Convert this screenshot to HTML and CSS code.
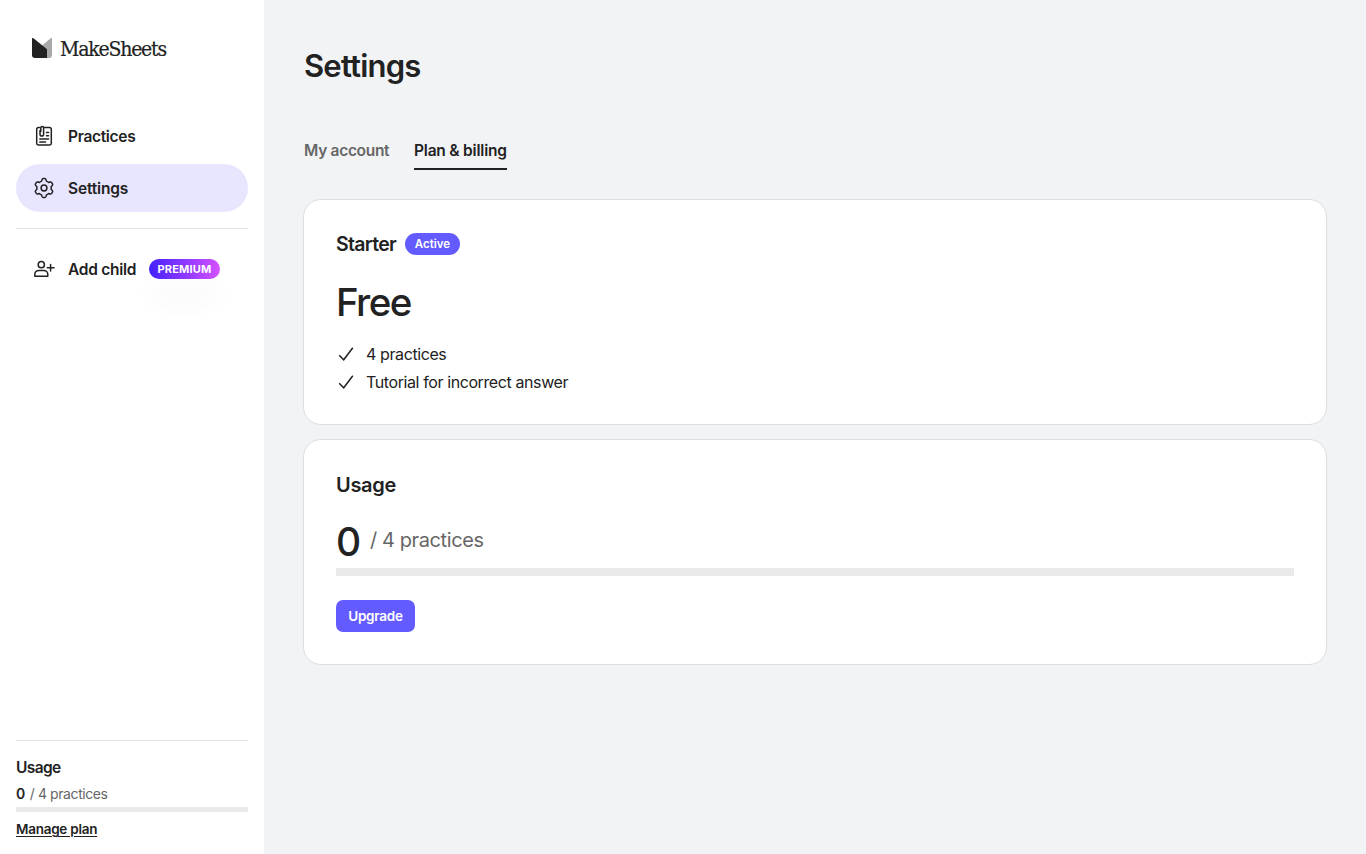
FILE: index.html
```html
<!DOCTYPE html>
<html lang="en">
<head>
<meta charset="utf-8">
<title>MakeSheets – Settings</title>
<link rel="stylesheet" href="styles.css">
</head>
<body>
<div class="app">
  <aside class="sidebar">
    <a class="logo">
      <svg width="20" height="20" viewBox="0 0 20 20"><path d="M20 .8V17a3 3 0 0 1-3 3h-3L9 8.500 18.600.2Q20-.6 20 .8z" fill="#a9a9a9"/><path d="M0 1Q0-.6 1.500.3L15 11.200V20H3a3 3 0 0 1-3-3z" fill="#222"/></svg>
      <span class="logo-text">MakeSheets</span>
    </a>
    <nav class="nav">
      <a class="nav-item">
        <svg class="icon" viewBox="0 0 24 24"><path d="M7.500 3.500h-1a1.800 1.800 0 0 0-1.800 1.800v14a1.800 1.800 0 0 0 1.800 1.800h11a1.800 1.800 0 0 0 1.800-1.800v-14a1.800 1.800 0 0 0-1.800-1.800H12M8 6.500v3.700a1.800 1.800 0 0 0 3.600 0V4a1.400 1.400 0 0 0-2.800 0v3.500M14.500 8.500h2M14.500 11.700h2M7.800 15h8.700M7.800 18h5.700"/></svg>
        <span class="label practices">Practices</span>
      </a>
      <a class="nav-item selected">
        <svg class="icon" viewBox="0 0 24 24"><path d="M10 3.600Q10.300 2.600 11.200 2.600h1.600q.9 0 1.200 1l.4 1.500q1.300.5 2.200 1.300l1.600-.4q1-.2 1.500.6l.8 1.400q.5.800-.2 1.500l-1.200 1.200q.2 1.300 0 2.600l1.200 1.200q.7.700.2 1.500l-.8 1.400q-.5.800-1.500.6l-1.600-.4q-.9.800-2.200 1.300l-.4 1.500q-.3 1-1.200 1h-1.600q-.9 0-1.200-1l-.4-1.500q-1.300-.5-2.200-1.300l-1.600.4q-1 .2-1.500-.6l-.8-1.400q-.5-.8.2-1.500l1.200-1.200q-.2-1.300 0-2.600L3.700 9.500q-.7-.7-.2-1.500l.8-1.400q.5-.8 1.500-.6l1.600.4q.9-.8 2.200-1.300z"/><circle cx="12" cy="12" r="2.900"/></svg>
        <span class="label settings">Settings</span>
      </a>
      <hr class="rule">
      <a class="nav-item">
        <svg class="icon" viewBox="0 0 24 24"><circle cx="9.300" cy="7.700" r="3.100"/><path d="M2.800 19.200v-1.800a4 4 0 0 1 4-4h5a4 4 0 0 1 4 4v1.800zM18.600 7.500v6.600M15.300 10.800h6.700"/></svg>
        <span class="label add">Add child</span>
        <span class="premium">PREMIUM</span>
      </a>
    </nav>
    <div class="side-usage">
      <div class="side-title">Usage</div>
      <div class="side-count"><b>0</b><span>/ 4 practices</span></div>
      <div class="side-bar"></div>
      <a class="manage">Manage plan</a>
    </div>
  </aside>
  <main class="main">
    <h1 class="title">Settings</h1>
    <div class="tabs">
      <a class="tab account">My account</a>
      <a class="tab current">Plan &amp; billing</a>
    </div>
    <section class="card">
      <div class="plan-head"><h2 class="plan-name">Starter</h2><span class="active-badge">Active</span></div>
      <div class="price">Free</div>
      <ul class="features">
        <li><svg class="check" viewBox="0 0 20 20"><path d="M3.200 11.300l4.500 4.500 9.100-12"/></svg><span class="f1">4 practices</span></li>
        <li><svg class="check" viewBox="0 0 20 20"><path d="M3.200 11.300l4.500 4.500 9.100-12"/></svg><span class="f2">Tutorial for incorrect answer</span></li>
      </ul>
    </section>
    <section class="card">
      <h2 class="usage-title">Usage</h2>
      <div class="count"><span class="big">0</span><span class="of">/ 4 practices</span></div>
      <div class="bar"></div>
      <button class="upgrade">Upgrade</button>
    </section>
  </main>
</div>
</body>
</html>
```
FILE: styles.css
```css
* { box-sizing: border-box; }
body { margin: 0; font-family: Inter, "Liberation Sans", sans-serif; color: #222; background: #f2f3f5; }
h1, h2, ul { margin: 0; padding: 0; }
.app { display: flex; height: 854px; }
.sidebar { width: 264px; background: #fff; padding: 32px 16px 0; display: flex; flex-direction: column; }
.logo { display: flex; align-items: center; gap: 8px; height: 32px; padding-left: 16px; }
.logo-text { padding-top: 1px; font: 21px/32px "DejaVu Serif Condensed", "DejaVu Serif", serif; font-stretch: condensed; letter-spacing: -1.2px; white-space: nowrap; -webkit-text-stroke: .2px #222; }
.nav { margin-top: 48px; display: flex; flex-direction: column; }
.nav-item { display: flex; align-items: center; height: 48px; padding-left: 16px; border-radius: 24px; margin-bottom: 4px; }
.selected { background: #e8e5ff; margin-bottom: 0; }
.icon { width: 24px; height: 24px; fill: none; stroke: #222; stroke-width: 1.5; stroke-linejoin: round; stroke-linecap: round; }
.label { margin-left: 12px; padding-top: 2px; font-size: 15.5px; font-weight: 600; line-height: 24px; white-space: nowrap; }
.practices { letter-spacing: -.31px; }
.settings { letter-spacing: -.16px; }
.add { letter-spacing: -.26px; width: 69px; }
.rule { width: 100%; height: 1px; border: 0; background: #e3e3e3; margin: 16px 0; }
.premium { margin-left: 12px; width: 71px; height: 20px; border-radius: 10px; background: linear-gradient(90deg, #4421ff, #d551ff); color: #fff; font-size: 11px; font-weight: 700; line-height: 21px; text-align: center; letter-spacing: .2px; box-shadow: 0 26px 20px 4px rgba(0, 0, 0, .015); }
.side-usage { margin-top: auto; height: 114px; border-top: 1px solid #e3e3e3; padding-top: 15px; }
.side-title { font-size: 15.5px; font-weight: 600; line-height: 23px; letter-spacing: -.6px; }
.side-count { display: flex; gap: 5px; margin-top: 5px; font-size: 14px; line-height: 20px; color: #666; letter-spacing: -.42px; }
.side-count b { color: #222; font-weight: 600; }
.side-bar { height: 5px; margin-top: 3px; background: #eaeaea; }
.manage { display: inline-block; margin-top: 7px; font-size: 13.5px; font-weight: 600; line-height: 20px; letter-spacing: -.26px; text-decoration: underline; text-decoration-thickness: 1px; text-underline-offset: 2px; }
.main { flex: 1; padding: 46px 39px 0; }
.title { margin-left: 1px; font-size: 31px; font-weight: 600; line-height: 40px; letter-spacing: -.8px; }
.tabs { display: flex; gap: 24px; margin: 52px 0 29px 1px; height: 32px; }
.tab { font-size: 15.5px; line-height: 25px; font-weight: 600; color: #666; white-space: nowrap; }
.account { width: 86px; letter-spacing: -.3px; }
.current { width: 93px; color: #222; border-bottom: 2px solid #222; letter-spacing: -.2px; }
.card { height: 226px; margin-bottom: 14px; padding: 32px; background: #fff; border: 1px solid #dcdee1; border-radius: 18px; }
.plan-head { display: flex; align-items: center; height: 24px; }
.plan-name { width: 61px; margin-right: 8px; font-size: 19.5px; line-height: 24px; font-weight: 600; letter-spacing: -.7px; }
.active-badge { width: 55px; height: 22px; border-radius: 11px; background: #635bff; color: #fff; font-size: 11.5px; font-weight: 600; line-height: 22px; text-align: center; }
.price { margin-top: 22px; font-size: 38.5px; font-weight: 500; line-height: 48px; letter-spacing: -1.6px; }
.features { list-style: none; margin-top: 14px; }
.features li { display: flex; align-items: center; gap: 10px; height: 28px; font-size: 16px; }
.check { width: 20px; height: 20px; fill: none; stroke: #222; stroke-width: 1.500; }
.f1, .f2 { letter-spacing: -.4px; }
.usage-title { font-size: 20px; font-weight: 600; line-height: 26px; letter-spacing: -.3px; }
.count { display: flex; align-items: center; height: 48px; margin-top: 20px; }
.big { width: 34px; font-size: 39px; line-height: 48px; font-weight: 500; }
.of { font-size: 20px; line-height: 28px; color: #666; margin-top: -4px; letter-spacing: -.4px; }
.bar { height: 8px; margin-top: 2px; background: #eaeaea; }
.upgrade { display: block; margin-top: 24px; width: 79px; height: 32px; padding: 0; border: 0; border-radius: 7px; background: #635bff; color: #fff; font: 600 13.5px/32px Inter, sans-serif; letter-spacing: -.25px; }
```
